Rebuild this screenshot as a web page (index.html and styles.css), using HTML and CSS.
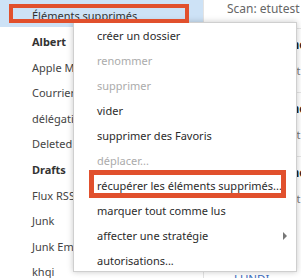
FILE: index.html
```html
<!DOCTYPE html>
<html lang="fr">
<head>
    <meta charset="UTF-8">
    <meta name="viewport" content="width=device-width, initial-scale=1.0">
    <title>Dossiers</title>
    <link rel="stylesheet" href="styles.css">
</head>
<body>
    <div class="mailApp">
        <ul class="folderList">
            <li class="folder selected">Éléments supprimés</li>
            <li class="folder unread">Albert</li>
            <li class="folder">Apple Mail To Do</li>
            <li class="folder">Courrier indésirable</li>
            <li class="folder">délégation</li>
            <li class="folder">Deleted Items</li>
            <li class="folder unread">Drafts <span class="count">3</span></li>
            <li class="folder">Flux RSS</li>
            <li class="folder">Junk</li>
            <li class="folder">Junk Email</li>
            <li class="folder">khqi</li>
        </ul>

        <div class="messagePane">
            <div class="paneHeader">Scan: etutest v</div>
            <div class="message">
                <div class="sender">Inbox scanner</div>
                <div class="subject">voir le rapport</div>
            </div>
            <div class="message">
                <div class="sender">Inbox scanner</div>
                <div class="subject">voir le rapport</div>
            </div>
            <div class="message">
                <div class="sender">Inbox scanner</div>
                <div class="subject">voir le rapport</div>
            </div>
            <div class="groupHeader">LUNDI</div>
        </div>
    </div>

    <ul class="contextMenu">
        <li class="menuItem">créer un dossier</li>
        <li class="menuItem disabled">renommer</li>
        <li class="menuItem disabled">supprimer</li>
        <li class="menuItem">vider</li>
        <li class="menuItem">supprimer des Favoris</li>
        <li class="menuItem disabled">déplacer...</li>
        <li class="menuItem">récupérer les éléments supprimés...</li>
        <li class="menuItem">marquer tout comme lus</li>
        <li class="menuItem hasSub">affecter une stratégie <span class="subArrow"></span></li>
        <li class="menuItem">autorisations...</li>
    </ul>

    <div class="highlight folderMark"></div>
    <div class="highlight menuMark"></div>
</body>
</html>
```

FILE: styles.css
```css
* {
    box-sizing: border-box;
}

body {
    margin: 0;
    width: 301px;
    height: 278px;
    overflow: hidden;
    position: relative;
    font-family: "Noto Sans", "Open Sans", sans-serif;
    font-size: 11px;
    color: #333;
    background-color: #fff;
}

ul {
    list-style: none;
    margin: 0;
    padding: 0;
}

.mailApp {
    display: flex;
    height: 100%;
    overflow: hidden;
}

.folderList {
    width: 204px;
    flex-shrink: 0;
    border-right: 1px solid #e3e3e3;
    background-color: #fff;
}

.folder {
    height: 25.6px;
    line-height: 25.6px;
    padding-left: 32px;
    white-space: nowrap;
    color: #444;
}

.folder.selected {
    height: 27px;
    line-height: 23px;
    padding-top: 4px;
    margin-bottom: 2px;
    background-color: #cde2f6;
    color: #333;
}

.folder.unread {
    font-weight: bold;
    color: #333;
}

.count {
    color: #2f6fc4;
    font-weight: normal;
    margin-left: 4px;
}

.messagePane {
    flex: 1;
    min-width: 0;
    padding-left: 23px;
    white-space: nowrap;
    overflow: hidden;
}

.paneHeader {
    height: 28px;
    line-height: 18px;
    color: #666;
    font-size: 12px;
}

.message {
    height: 64px;
    border-top: 1px solid #e6e6e6;
    padding-top: 3px;
}

.sender {
    font-weight: bold;
    font-size: 12px;
    color: #222;
    line-height: 26px;
}

.subject {
    color: #777;
    line-height: 26px;
}

.groupHeader {
    padding-top: 51px;
    padding-left: 7px;
    color: #3a6cc0;
    font-size: 11.5px;
    line-height: 16px;
}

.contextMenu {
    position: absolute;
    left: 73px;
    top: 22px;
    width: 224px;
    height: 250px;
    background-color: #fff;
    border: 1px solid #cfcfcf;
    box-shadow: 0 0 6px rgba(0, 0, 0, 0.22);
}

.menuItem {
    height: 25px;
    line-height: 25px;
    padding-left: 23px;
    color: #2b2b2b;
    white-space: nowrap;
    display: flex;
    align-items: center;
}

.menuItem.disabled {
    color: #ababab;
}

.subArrow {
    margin-left: auto;
    margin-right: 9px;
    width: 0;
    height: 0;
    border-top: 4px solid transparent;
    border-bottom: 4px solid transparent;
    border-left: 4px solid #777;
}

.highlight {
    position: absolute;
    border: 4px solid #e1502d;
}

.folderMark {
    left: 9px;
    top: 4px;
    width: 180px;
    height: 19px;
}

.menuMark {
    left: 89px;
    top: 170px;
    width: 197px;
    height: 28px;
    border-width: 5px;
}
```
